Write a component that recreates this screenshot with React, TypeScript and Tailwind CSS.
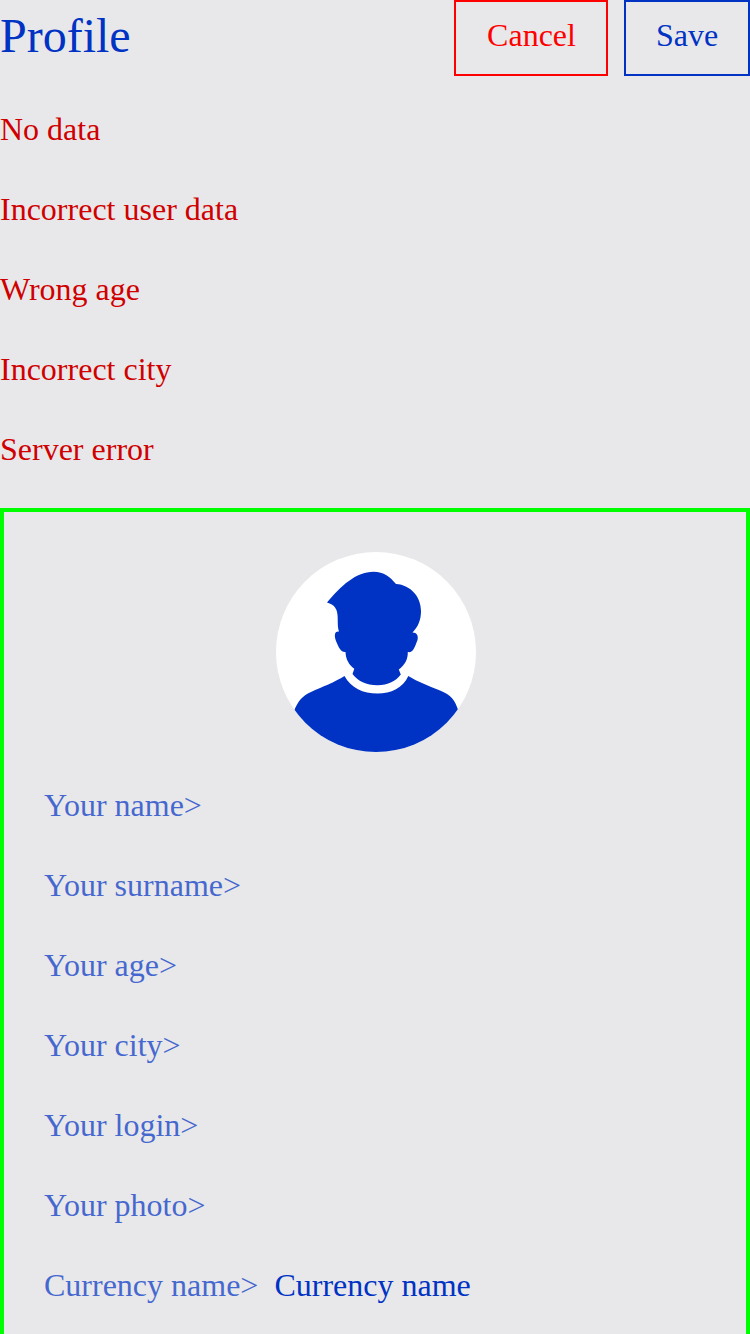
const errors = ["No data", "Incorrect user data", "Wrong age", "Incorrect city", "Server error"];
const fields = ["Your name>", "Your surname>", "Your age>", "Your city>", "Your login>", "Your photo>"];

function Avatar() {
  return (
    <svg className="block h-[200px] w-[200px]" viewBox="276 552 200 200">
      <defs>
        <clipPath id="disc"><circle cx="376" cy="652" r="100" /></clipPath>
      </defs>
      <circle cx="376" cy="652" r="100" fill="#fff" />
      <g fill="#0033c4" clipPath="url(#disc)">
        <path d="M327 602.5C341 586 356 571.8 373.500 571.8C384 572 390 577 396 584C411 585 421 597 421 611C421 620 418 627 412.500 632.500C417 632.500 418.500 636 417.500 640C414.500 648 413 653 407.800 652C408 659 405 665 398.800 669.500L400.800 674.500C396 681 388 685.300 377.500 685.300C366 685.300 358 681 352.500 674L354.300 668.700C349 665 345.700 659 345.500 652C341 652.500 339 648 336 641C334.300 636 334 631 339 631.500C335.500 620 342.500 607 327 602.500Z" />
        <path d="M294 711C298 701 302 696 311 692C322 687 335 682 344.500 676C351 688 363 693.500 377.500 693.500C391 693.500 403 688 408.300 676C418 682 429 686 440 690.500C451 695 455 700 458.500 711L459 760H294Z" />
      </g>
    </svg>
  );
}

export default function App() {
  return (
    <main className="h-[1334px] w-[750px] overflow-hidden bg-[#e8e8ea] font-['Liberation_Serif',serif] text-[32px] leading-[38px] text-[#0033c4]">
      <header className="flex h-[76px] justify-between">
        <h1 className="text-[48px] leading-[72px]">Profile</h1>
        <div className="flex gap-4">
          <button className="w-[154px] border-2 border-[#ff0000] pb-1.5 pl-px text-[#ff0000]">Cancel</button>
          <button className="w-[126px] border-2 border-[#0033c4] pb-1.5">Save</button>
        </div>
      </header>
      <ul className="flex h-[432px] flex-col gap-[42px] pt-[34px] text-[#d00000]">
        {errors.map((e) => <li key={e}>{e}</li>)}
      </ul>
      <section className="h-[900px] border-4 border-[#00ff00] px-10 pt-10">
        <div className="flex justify-center pl-[2px]"><Avatar /></div>
        <div className="flex flex-col gap-[42px] pt-[34px]">
          {fields.map((f) => <div key={f} className="opacity-70">{f}</div>)}
          <div className="flex gap-4"><span className="opacity-70">Currency name&gt;</span><span>Currency name</span></div>
        </div>
      </section>
    </main>
  );
}
